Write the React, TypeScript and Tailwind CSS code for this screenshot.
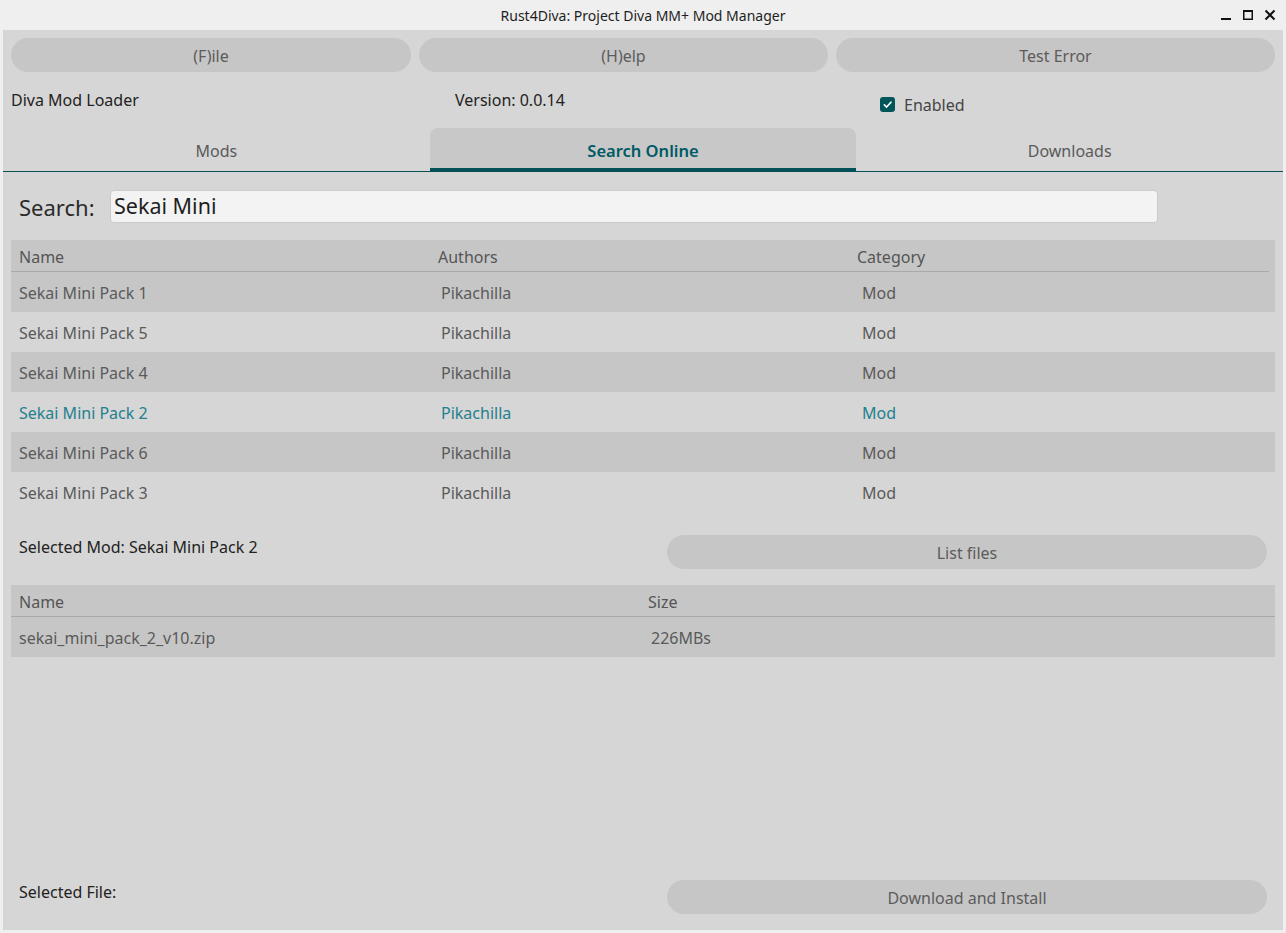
import React from "react";

const rows = [
  { name: "Sekai Mini Pack 1", author: "Pikachilla", cat: "Mod" },
  { name: "Sekai Mini Pack 5", author: "Pikachilla", cat: "Mod" },
  { name: "Sekai Mini Pack 4", author: "Pikachilla", cat: "Mod" },
  { name: "Sekai Mini Pack 2", author: "Pikachilla", cat: "Mod", selected: true },
  { name: "Sekai Mini Pack 6", author: "Pikachilla", cat: "Mod" },
  { name: "Sekai Mini Pack 3", author: "Pikachilla", cat: "Mod" },
];

export default function App() {
  return (
    <div
      className="w-[1286px] h-[933px] bg-[#efefef] flex flex-col overflow-hidden"
      style={{ fontFamily: '"Noto Sans", "Open Sans", sans-serif' }}
    >
      {/* Title bar */}
      <div className="h-[30px] relative flex items-center justify-center text-[14px] text-[#1e1e1e]">
        <span>Rust4Diva: Project Diva MM+ Mod Manager</span>
        <div className="absolute right-[10px] top-[9px] flex items-center gap-[10px]">
          <svg width="12" height="12" viewBox="0 0 12 12">
            <rect x="1" y="9" width="10" height="2" fill="#111" />
          </svg>
          <svg width="12" height="12" viewBox="0 0 12 12">
            <rect x="1.75" y="1.75" width="8.5" height="8.5" fill="none" stroke="#111" strokeWidth="1.5" />
            <rect x="1" y="1" width="10" height="2" fill="#111" />
          </svg>
          <svg width="12" height="12" viewBox="0 0 12 12">
            <path d="M1.5 1.5 L10.5 10.5 M10.5 1.5 L1.5 10.5" stroke="#111" strokeWidth="2" />
          </svg>
        </div>
      </div>

      {/* Content */}
      <div className="mx-[3px] h-[900px] bg-[#d6d6d6] flex flex-col">
        {/* Buttons */}
        <div className="mt-[8px] px-[8px] flex gap-[8px] h-[34px]">
          <button className="w-[400px] h-full rounded-full bg-[#c6c6c6] text-[16px] text-[#5c5c5c] pt-[2px]">(F)ile</button>
          <button className="w-[409px] h-full rounded-full bg-[#c6c6c6] text-[16px] text-[#5c5c5c] pt-[2px]">(H)elp</button>
          <button className="flex-1 h-full rounded-full bg-[#c6c6c6] text-[16px] text-[#5c5c5c] pt-[2px]">Test Error</button>
        </div>

        {/* Info row */}
        <div className="h-[56px] flex pl-[8px]">
          <div className="w-[444px] pt-[16px] text-[16px] text-[#222] leading-[24px]">Diva Mod Loader</div>
          <div className="w-[425px] pt-[16px] text-[16px] text-[#222] leading-[24px]">Version: 0.0.14</div>
          <div className="pt-[19px] flex items-start gap-[9px] leading-[24px]">
            <span className="w-[15px] h-[15px] mt-[6px] rounded-[3px] bg-[#00555b] flex items-center justify-center">
              <svg width="11" height="11" viewBox="0 0 12 12">
                <path d="M2.5 6.3 L5 8.8 L9.8 3.5" fill="none" stroke="#fff" strokeWidth="1.8" strokeLinecap="round" strokeLinejoin="round" />
              </svg>
            </span>
            <span className="text-[16px] text-[#444] mt-[2px]">Enabled</span>
          </div>
        </div>

        {/* Tabs */}
        <div className="grid grid-cols-3 h-[44px] border-b border-[#0b4f56]">
          <div className="flex items-center justify-center text-[16px] text-[#5a5a5a] pt-[2px]">Mods</div>
          <div className="flex items-center justify-center text-[16.5px] font-semibold text-[#005a66] bg-[#c8c8c8] rounded-t-[8px] border-b-[3px] border-[#005058] pt-[6px]">
            Search Online
          </div>
          <div className="flex items-center justify-center text-[16px] text-[#5a5a5a] pt-[2px]">Downloads</div>
        </div>

        {/* Search */}
        <div className="h-[68px] flex items-center pl-[16px]">
          <span className="w-[91px] text-[22px] text-[#2a2a2a] pt-[2px]">Search:</span>
          <div className="w-[1048px] h-[33px] rounded-[4px] bg-[#f3f3f3] border border-[#cbcbcb] flex items-center px-[3px] text-[21.5px] text-[#1e1e1e]">
            Sekai Mini
          </div>
        </div>

        {/* Results table */}
        <div className="mx-[8px]">
          <div className="h-[32px] bg-[#c6c6c6] flex flex-col">
            <div className="h-[31px] flex items-center text-[16px] text-[#555] pt-[2px]">
              <span className="w-[419px] pl-[8px]">Name</span>
              <span className="w-[419px] pl-[8px]">Authors</span>
              <span className="pl-[8px]">Category</span>
            </div>
            <div className="h-[1px] bg-[#a9a9a9] mr-[6px]" />
          </div>
          {rows.map((r, i) => (
            <div
              key={r.name}
              className={
                "h-[40px] flex items-center text-[16px] pt-[2px] " +
                (i % 2 === 0 ? "bg-[#c6c6c6] " : "bg-[#d6d6d6] ") +
                (r.selected ? "text-[#23808e]" : "text-[#5a5a5a]")
              }
            >
              <span className="w-[422px] pl-[8px]">{r.name}</span>
              <span className="w-[421px] pl-[8px]">{r.author}</span>
              <span className="pl-[8px]">{r.cat}</span>
            </div>
          ))}
        </div>

        {/* Selected mod row */}
        <div className="h-[73px] flex items-center pl-[16px] pr-[16px]">
          <span className="w-[648px] text-[16px] text-[#222] -mt-[3px]">Selected Mod: Sekai Mini Pack 2</span>
          <button className="flex-1 h-[34px] mt-[6px] rounded-full bg-[#c6c6c6] text-[16px] text-[#5c5c5c] pt-[2px]">List files</button>
        </div>

        {/* Files table */}
        <div className="mx-[8px]">
          <div className="h-[32px] bg-[#c6c6c6] flex flex-col">
            <div className="h-[31px] flex items-center text-[16px] text-[#555] pt-[2px]">
              <span className="w-[629px] pl-[8px]">Name</span>
              <span className="pl-[8px]">Size</span>
            </div>
            <div className="h-[1px] bg-[#a9a9a9]" />
          </div>
          <div className="h-[40px] bg-[#c6c6c6] flex items-center text-[16px] text-[#5a5a5a] pt-[2px]">
            <span className="w-[632px] pl-[8px]">sekai_mini_pack_2_v10.zip</span>
            <span className="pl-[8px]">226MBs</span>
          </div>
        </div>

        <div className="flex-1" />

        {/* Bottom row */}
        <div className="h-[34px] mb-[16px] flex items-center pl-[16px] pr-[16px]">
          <span className="w-[648px] text-[16px] text-[#222] -mt-[10px]">Selected File:</span>
          <button className="flex-1 h-[34px] rounded-full bg-[#c6c6c6] text-[16px] text-[#5c5c5c] pt-[2px]">Download and Install</button>
        </div>
      </div>
    </div>
  );
}
